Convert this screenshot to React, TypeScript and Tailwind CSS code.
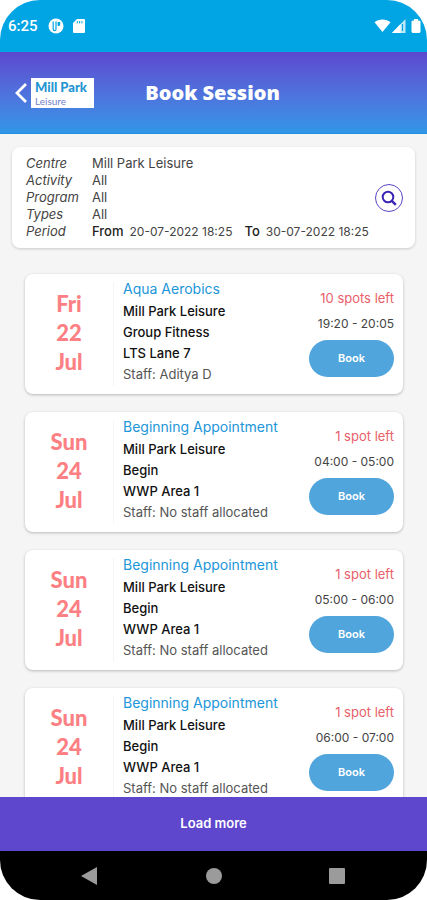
interface Session {
  id: number
  day: string
  date: string
  month: string
  title: string
  centre: string
  activity: string
  area: string
  staff: string
  spots: string
  time: string
}

const sessions: Session[] = [
  {
    id: 1,
    day: "Fri",
    date: "22",
    month: "Jul",
    title: "Aqua Aerobics",
    centre: "Mill Park Leisure",
    activity: "Group Fitness",
    area: "LTS Lane 7",
    staff: "Aditya D",
    spots: "10 spots left",
    time: "19:20 - 20:05",
  },
  ...["04:00 - 05:00", "05:00 - 06:00", "06:00 - 07:00"].map((time, i) => ({
    id: i + 2,
    day: "Sun",
    date: "24",
    month: "Jul",
    title: "Beginning Appointment",
    centre: "Mill Park Leisure",
    activity: "Begin",
    area: "WWP Area 1",
    staff: "No staff allocated",
    spots: "1 spot left",
    time,
  })),
]

const filters = [
  ["Centre", "Mill Park Leisure"],
  ["Activity", "All"],
  ["Program", "All"],
  ["Types", "All"],
]

function StatusBar() {
  return (
    <div className="flex h-[52px] shrink-0 items-center bg-[#02a5e4] pl-2 pr-1.5 text-white">
      <span className="font-['Roboto',sans-serif] text-[15px] font-medium">6:25</span>
      <svg className="ml-2.5 size-4" viewBox="0 0 16 16">
        <circle cx="8" cy="8" r="7.5" fill="currentColor" />
        <path d="M5.2 3.6v7.6a1.4 1.4 0 0 0 2.8 0V3.4" fill="none" stroke="#02a5e4" strokeWidth="1.2" />
        <path d="M9.6 4h2.6v2.4a1.6 1.6 0 0 1-1.6 1.6h-1z" fill="#02a5e4" />
      </svg>
      <svg className="ml-2 h-4 w-3.5" viewBox="0 0 14 16">
        <path d="M5 1h7a1 1 0 0 1 1 1v12a1 1 0 0 1-1 1H2a1 1 0 0 1-1-1V5z" fill="currentColor" />
        <path d="M5.3 3v2.4M7.6 3v2.4M9.9 3v2.4" stroke="#02a5e4" strokeWidth="1" />
      </svg>
      <svg className="ml-auto h-4 w-[17px]" viewBox="0 0 17 16">
        <path d="M.5 4.3C5 .6 12 .6 16.5 4.3L8.500 14z" fill="currentColor" />
      </svg>
      <svg className="h-4 w-4" viewBox="0 0 16 16">
        <path d="M1 15 14.5 1v14z" fill="currentColor" opacity=".75" />
        <path d="M1 15 9.5 6v9z" fill="currentColor" />
        <path d="M11.5 6v7" stroke="#02a5e4" strokeWidth="1.2" />
      </svg>
      <svg className="ml-1 h-4 w-2.5" viewBox="0 0 10 16">
        <path d="M3 1h4v1.500h1.500l1 1V14l-1 1h-7l-1-1V3.500l1-1H3z" fill="currentColor" />
      </svg>
    </div>
  )
}

function Header() {
  return (
    <header className="grid h-[82px] shrink-0 grid-cols-[1fr_auto_1fr] items-center border-b border-[#2291dc] bg-linear-to-b from-[#5b48cf] to-[#2f96e8] pl-3.5 pr-4">
      <div className="flex items-center gap-[3px]">
        <button aria-label="Back" className="text-white">
          <svg className="h-6 w-3.5" viewBox="0 0 14 24">
            <path d="M12 3 3 12l9 9" fill="none" stroke="currentColor" strokeWidth="2.800" />
          </svg>
        </button>
        <div className="flex h-[30px] w-[63px] flex-col justify-center bg-white pl-1 font-['Lato',sans-serif] whitespace-nowrap">
          <span className="block text-[13px] leading-4 font-black text-[#2494d2]">Mill Park</span>
          <span className="block text-[10px] leading-3 text-[#7180cd]">Leisure</span>
        </div>
      </div>
      <h1 className="font-['Noto_Sans',sans-serif] text-xl font-black text-white">Book Session</h1>
    </header>
  )
}

function FilterCard() {
  return (
    <section className="mx-3 mt-[13px] flex items-center rounded-lg bg-white py-2 pl-3.5 pr-3 text-[#444] shadow-[0_1px_3px_rgba(0,0,0,0.18)]">
      <dl className="grid flex-1 grid-cols-[66px_1fr] text-[13px] leading-[17px] whitespace-nowrap">
        {filters.map(([label, value]) => (
          <div key={label} className="contents">
            <dt className="italic">{label}</dt>
            <dd>{value}</dd>
          </div>
        ))}
        <dt className="italic">Period</dt>
        <dd className="flex">
          <span className="mr-1.5 font-medium text-[#222]">From</span>
          <span className="text-xs leading-[17px]">20-07-2022 18:25</span>
          <span className="ml-3 mr-1.5 font-medium text-[#222]">To</span>
          <span className="text-xs leading-[17px]">30-07-2022 18:25</span>
        </dd>
      </dl>
      <button
        aria-label="Search"
        className="flex size-7 shrink-0 items-center justify-center rounded-full border border-[#5b45c5] text-[#3d24b4]"
      >
        <svg className="size-4" viewBox="0 0 16 16" fill="none" stroke="currentColor">
          <circle cx="7" cy="7" r="5.3" strokeWidth="2" />
          <path d="m10.8 10.8 4 4" strokeWidth="2.5" />
        </svg>
      </button>
    </section>
  )
}

function SessionCard({ session }: { session: Session }) {
  return (
    <article className="flex h-[120px] shrink-0 rounded-lg bg-white py-2 pr-[9px] shadow-[0_1px_3px_rgba(0,0,0,0.25)]">
      <div className="flex w-[89px] flex-col items-center justify-center border-r border-[#f5f5f5] pb-1 font-['Lato',sans-serif] text-[22px] leading-[29px] font-black text-[#fb7f83]">
        <span>{session.day}</span>
        <span>{session.date}</span>
        <span>{session.month}</span>
      </div>
      <div className="flex-1 pl-[9px] text-[13px] leading-[21px] whitespace-nowrap text-[#111]">
        <h2 className="-mt-1 mb-0.5 text-sm leading-[21px] text-[#2196d8]">{session.title}</h2>
        <p className="font-medium">{session.centre}</p>
        <p className="font-medium">{session.activity}</p>
        <p className="font-medium">{session.area}</p>
        <p className="text-[#555]">Staff: {session.staff}</p>
      </div>
      <div className="flex flex-col items-end pt-1 text-[13px] leading-[25px] whitespace-nowrap">
        <p className="text-[#e8606a]">{session.spots}</p>
        <p className="text-xs leading-[25px] text-[#444]">{session.time}</p>
        <button className="mt-1 h-[37px] w-[85px] rounded-full bg-[#50a5dc] text-[11px] font-semibold text-white">
          Book
        </button>
      </div>
    </article>
  )
}

function NavBar() {
  return (
    <nav className="flex h-[49px] shrink-0 items-center justify-between bg-black pl-20 pr-[82px] text-[#9b9b9b]">
      <button aria-label="Back">
        <svg className="size-[18px]" viewBox="0 0 18 18" fill="currentColor">
          <path d="M17 0v18L1 9z" />
        </svg>
      </button>
      <button aria-label="Home">
        <svg className="size-4" viewBox="0 0 16 16" fill="currentColor">
          <circle cx="8" cy="8" r="8" />
        </svg>
      </button>
      <button aria-label="Recent apps">
        <svg className="size-4" viewBox="0 0 16 16" fill="currentColor">
          <rect width="16" height="16" rx="1" />
        </svg>
      </button>
    </nav>
  )
}

export default function App() {
  return (
    <div className="h-screen bg-white">
      <div className="flex h-full flex-col overflow-hidden rounded-[40px] bg-[#f5f5f5] font-['Inter',sans-serif]">
        <StatusBar />
        <Header />
        <main className="flex min-h-0 flex-1 flex-col overflow-hidden">
          <FilterCard />
          <div className="mt-[26px] flex flex-col gap-[18px] pl-[25px] pr-6">
            {sessions.map((session) => (
              <SessionCard key={session.id} session={session} />
            ))}
          </div>
        </main>
        <button className="h-[54px] shrink-0 bg-[#5e46cd] text-[13px] font-semibold text-white">Load more</button>
        <NavBar />
      </div>
    </div>
  )
}
